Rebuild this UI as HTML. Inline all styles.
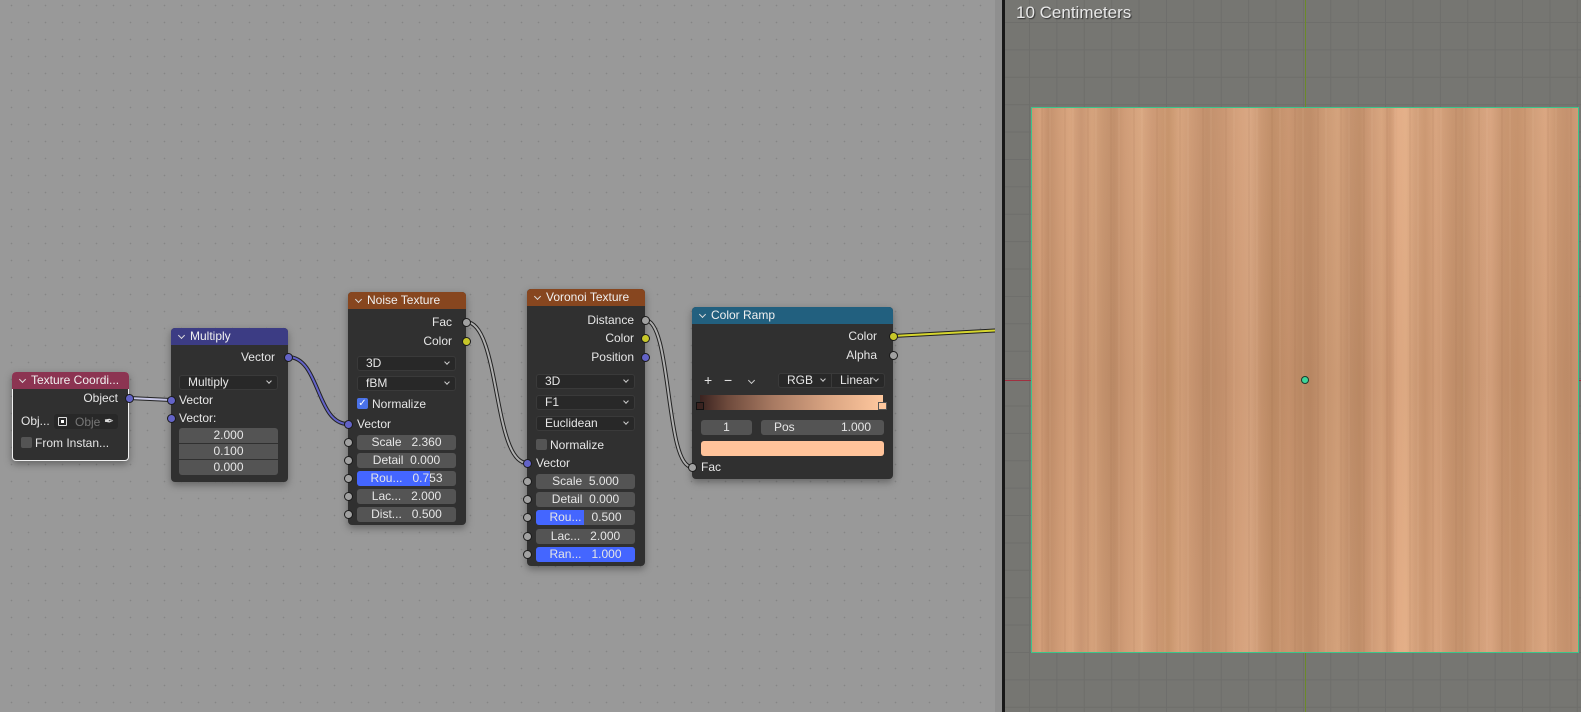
<!DOCTYPE html>
<html><head><meta charset="utf-8">
<style>
*{box-sizing:border-box;margin:0;padding:0}
body{width:1581px;height:712px;overflow:hidden;position:relative;background:#999;font-family:"Liberation Sans","DejaVu Sans",sans-serif;font-size:12px;color:#e6e6e6}
.ne{position:absolute;left:0;top:0;width:995px;height:712px;background-color:#999;
background-image:radial-gradient(circle,#858585 0.6px,transparent 1px);background-size:17px 17px;background-position:3px -3px}
.a{position:absolute}
.node{position:absolute;background:#303030;border-radius:4px;box-shadow:0 3px 8px rgba(0,0,0,.35)}
.hd{position:absolute;left:0;top:0;right:0;height:17px;border-radius:4px 4px 0 0;color:#f0f0f0;font-size:12px;line-height:17px;padding-left:19px;white-space:nowrap;overflow:hidden}
.hd:before{content:"";position:absolute;left:8px;top:5px;width:4px;height:4px;border-right:1px solid #ddd;border-bottom:1px solid #ddd;transform:rotate(45deg)}
.lbl{position:absolute;line-height:14px;white-space:nowrap}
.sk{position:absolute;width:9px;height:9px;border-radius:50%;border:1px solid #1a1a1a;margin:-4.5px 0 0 -4.5px}
.v{background:#6363c7}.g{background:#a1a1a1}.y{background:#c7c729}
.fld{position:absolute;height:15px;background:#545454;border-radius:3px;line-height:15px;text-align:center;white-space:nowrap;overflow:hidden}
.fld .bl{position:absolute;left:0;top:0;bottom:0;background:#4466ff}
.fld span{position:relative}
.dd{position:absolute;height:15px;background:#282828;border:1px solid #3a3a3a;border-radius:3px;line-height:13px;padding-left:8px;white-space:nowrap}
.dd:after{content:"";position:absolute;right:6px;top:3px;width:3px;height:3px;border-right:1px solid #ccc;border-bottom:1px solid #ccc;transform:rotate(45deg)}
.cb{position:absolute;width:11px;height:11px;border-radius:2px;background:#545454}
.vp{position:absolute;left:1005px;top:0;width:576px;height:712px;background-color:#767672;
background-image:linear-gradient(to right,#6e6e6b 1px,transparent 1px),linear-gradient(to bottom,#6e6e6b 1px,transparent 1px);
background-size:27.4px 27.4px;background-position:24px 22px}
.wood{position:absolute;left:1031px;top:107px;width:548px;height:546px;border:1.5px solid #3cc48a;
background:
repeating-linear-gradient(to right,rgba(0,0,0,0) 0px,rgba(0,0,0,0) 9px,rgba(150,100,70,.18) 10px,rgba(0,0,0,0) 11px,rgba(0,0,0,0) 17px,rgba(255,220,190,.12) 18px,rgba(0,0,0,0) 19px,rgba(0,0,0,0) 23px),
linear-gradient(to bottom,rgba(255,255,255,.03),rgba(0,0,0,.03) 50%,rgba(255,255,255,.02)),
linear-gradient(to right,#c9916c 0%,#d39e78 1.5%,#c28e69 3%,#cf9a74 5%,#d8a37c 7%,#c89470 9%,#d4a079 11%,#c8956f 13%,#c08d68 15%,#cf9a74 17%,#d8a57e 20%,#cd9873 22%,#c69269 25%,#d6a27b 27%,#c99570 30%,#c08d68 32%,#c8946f 35%,#d5a07a 38%,#d8a580 40%,#c9956f 42%,#bf8c65 44%,#c9946e 47%,#c08d67 49%,#bd8a65 51%,#c8956f 53%,#d3a079 56%,#c4916c 58%,#bf8c66 60%,#cd9873 62%,#d7a37c 64%,#cc9670 65.5%,#e2ab84 67%,#e3ae86 68.5%,#d4a07a 70%,#cb966f 72%,#d7a27c 74%,#c7936d 77%,#c28f69 79%,#cf9b75 81%,#d8a37e 84%,#c8946e 86%,#c59069 89%,#d19d77 92%,#d9a47e 94%,#c9956f 96%,#c38f6a 98%,#cd9873 100%)}
</style></head><body>
<div class="ne"></div>

<svg class="a" style="left:0;top:0" width="1005" height="712">
<g fill="none" stroke-linecap="round">
<path d="M129 398 L171 400" stroke="#222" stroke-width="4"/><path d="M129 398 L171 400" stroke="#c8c8e8" stroke-width="2"/>
<path d="M288 357 C320 357,316 424,348 424" stroke="#222" stroke-width="4"/><path d="M288 357 C320 357,316 424,348 424" stroke="#6363c7" stroke-width="2"/>
<path d="M466 322 C500 322,493 463,527 463" stroke="#222" stroke-width="4"/><path d="M466 322 C500 322,493 463,527 463" stroke="#b0b0b0" stroke-width="2"/>
<path d="M645 320 C672 320,665 467,692 467" stroke="#222" stroke-width="4"/><path d="M645 320 C672 320,665 467,692 467" stroke="#b0b0b0" stroke-width="2"/>
<path d="M893 336 L1004 330" stroke="#222" stroke-width="4"/><path d="M893 336 L1004 330" stroke="#d6d62e" stroke-width="2"/>
</g></svg>

<div class="a" style="left:995px;top:0;width:7px;height:712px;background:#8f8f8f"></div>
<div class="a" style="left:1002px;top:0;width:3px;height:712px;background:#181818"></div>
<div class="vp"></div>
<div class="a" style="left:1305px;top:0;width:1px;height:712px;background:#6b8a2a"></div>
<div class="a" style="left:1005px;top:380px;width:576px;height:1px;background:#a03040"></div>
<div class="wood"></div>
<div class="a" style="left:1301px;top:376px;width:8px;height:8px;border-radius:50%;background:#3cd59a;border:1px solid #1c3a2c"></div>
<div class="lbl" style="left:1016px;top:3px;font-size:17px;line-height:20px;color:#e8e8e8;text-shadow:1px 1px 1px #333">10 Centimeters</div>

<!-- Texture Coordinate -->
<div class="node" style="left:12px;top:372px;width:117px;height:89px;border:1px solid #f0f0f0">
<div class="hd" style="background:#8c3452;top:-1px;left:-1px;right:-1px">Texture Coordi...</div>
</div>
<div class="lbl" style="left:60px;top:391px;width:58px;text-align:right">Object</div>
<div class="sk v" style="left:129px;top:398px"></div>
<div class="lbl" style="left:21px;top:414px">Obj...</div>
<div class="a" style="left:54px;top:414px;width:64px;height:15px;background:#282828;border-radius:3px"></div>
<div class="a" style="left:58px;top:417px;width:9px;height:9px;border:1px solid #ddd;border-radius:1px"><div style="margin:2px;width:3px;height:3px;background:#fff"></div></div>
<div class="lbl" style="left:75px;top:415px;color:#777">Obje</div>
<div class="lbl" style="left:104px;top:414px;color:#ddd">&#10002;</div>
<div class="cb" style="left:21px;top:437px"></div>
<div class="lbl" style="left:35px;top:436px">From Instan...</div>

<!-- Multiply -->
<div class="node" style="left:171px;top:328px;width:117px;height:154px">
<div class="hd" style="background:#3c3c84">Multiply</div>
</div>
<div class="lbl" style="left:200px;top:350px;width:75px;text-align:right">Vector</div>
<div class="sk v" style="left:288px;top:357px"></div>
<div class="dd" style="left:179px;top:375px;width:99px">Multiply</div>
<div class="sk v" style="left:171px;top:400px"></div>
<div class="lbl" style="left:179px;top:393px">Vector</div>
<div class="sk v" style="left:171px;top:418px"></div>
<div class="lbl" style="left:179px;top:411px">Vector:</div>
<div class="fld" style="left:179px;top:428px;width:99px;border-radius:3px 3px 0 0">2.000</div>
<div class="fld" style="left:179px;top:444px;width:99px;border-radius:0">0.100</div>
<div class="fld" style="left:179px;top:460px;width:99px;border-radius:0 0 3px 3px">0.000</div>

<!-- Noise -->
<div class="node" style="left:348px;top:292px;width:118px;height:233px">
<div class="hd" style="background:#87461f">Noise Texture</div>
</div>
<div class="lbl" style="left:400px;top:315px;width:52px;text-align:right">Fac</div>
<div class="sk g" style="left:466px;top:322px"></div>
<div class="lbl" style="left:400px;top:334px;width:52px;text-align:right">Color</div>
<div class="sk y" style="left:466px;top:341px"></div>
<div class="dd" style="left:357px;top:356px;width:99px">3D</div>
<div class="dd" style="left:357px;top:376px;width:99px">fBM</div>
<div class="cb" style="left:357px;top:398px;background:#4a72e8;color:#fff;font-size:10px;line-height:11px;text-align:center">&#10003;</div>
<div class="lbl" style="left:372px;top:397px">Normalize</div>
<div class="sk v" style="left:348px;top:424px"></div>
<div class="lbl" style="left:357px;top:417px">Vector</div>
<div class="sk g" style="left:348px;top:442px"></div><div class="fld" style="left:357px;top:435px;width:99px">Scale&nbsp;&nbsp;&nbsp;2.360</div>
<div class="sk g" style="left:348px;top:460px"></div><div class="fld" style="left:357px;top:453px;width:99px">Detail&nbsp;&nbsp;0.000</div>
<div class="sk g" style="left:348px;top:478px"></div><div class="fld" style="left:357px;top:471px;width:99px"><div class="bl" style="width:73px"></div><span>Rou...&nbsp;&nbsp;&nbsp;0.753</span></div>
<div class="sk g" style="left:348px;top:496px"></div><div class="fld" style="left:357px;top:489px;width:99px">Lac...&nbsp;&nbsp;&nbsp;2.000</div>
<div class="sk g" style="left:348px;top:514px"></div><div class="fld" style="left:357px;top:507px;width:99px">Dist...&nbsp;&nbsp;&nbsp;0.500</div>

<!-- Voronoi -->
<div class="node" style="left:527px;top:289px;width:118px;height:277px">
<div class="hd" style="background:#87461f">Voronoi Texture</div>
</div>
<div class="lbl" style="left:560px;top:313px;width:74px;text-align:right">Distance</div>
<div class="sk g" style="left:645px;top:320px"></div>
<div class="lbl" style="left:560px;top:331px;width:74px;text-align:right">Color</div>
<div class="sk y" style="left:645px;top:338px"></div>
<div class="lbl" style="left:560px;top:350px;width:74px;text-align:right">Position</div>
<div class="sk v" style="left:645px;top:357px"></div>
<div class="dd" style="left:536px;top:374px;width:99px">3D</div>
<div class="dd" style="left:536px;top:395px;width:99px">F1</div>
<div class="dd" style="left:536px;top:416px;width:99px">Euclidean</div>
<div class="cb" style="left:536px;top:439px"></div>
<div class="lbl" style="left:550px;top:438px">Normalize</div>
<div class="sk v" style="left:527px;top:463px"></div>
<div class="lbl" style="left:536px;top:456px">Vector</div>
<div class="sk g" style="left:527px;top:481px"></div><div class="fld" style="left:536px;top:474px;width:99px">Scale&nbsp;&nbsp;5.000</div>
<div class="sk g" style="left:527px;top:499px"></div><div class="fld" style="left:536px;top:492px;width:99px">Detail&nbsp;&nbsp;0.000</div>
<div class="sk g" style="left:527px;top:517px"></div><div class="fld" style="left:536px;top:510px;width:99px"><div class="bl" style="width:48px"></div><span>Rou...&nbsp;&nbsp;&nbsp;0.500</span></div>
<div class="sk g" style="left:527px;top:536px"></div><div class="fld" style="left:536px;top:529px;width:99px">Lac...&nbsp;&nbsp;&nbsp;2.000</div>
<div class="sk g" style="left:527px;top:554px"></div><div class="fld" style="left:536px;top:547px;width:99px"><div class="bl" style="width:99px"></div><span>Ran...&nbsp;&nbsp;&nbsp;1.000</span></div>

<!-- Color Ramp -->
<div class="node" style="left:692px;top:307px;width:201px;height:172px">
<div class="hd" style="background:#22607f">Color Ramp</div>
</div>
<div class="lbl" style="left:820px;top:329px;width:57px;text-align:right">Color</div>
<div class="sk y" style="left:893px;top:336px"></div>
<div class="lbl" style="left:820px;top:348px;width:57px;text-align:right">Alpha</div>
<div class="sk g" style="left:893px;top:355px"></div>
<div class="lbl" style="left:704px;top:373px;font-size:14px">+</div>
<div class="lbl" style="left:724px;top:373px;font-size:14px">&#8722;</div>
<div class="a" style="left:749px;top:378px;width:5px;height:5px;border-right:1px solid #ccc;border-bottom:1px solid #ccc;transform:rotate(45deg)"></div>
<div class="dd" style="left:778px;top:373px;width:54px;border-radius:3px 0 0 3px">RGB</div>
<div class="dd" style="left:831px;top:373px;width:54px;border-radius:0 3px 3px 0">Linear</div>
<div class="a" style="left:700px;top:395px;width:183px;height:15px;background:linear-gradient(to right,#3a2320,#6e4a3c 15%,#a87a62 40%,#d9a482 70%,#ffc89e)"></div>
<div class="a" style="left:696px;top:402px;width:8px;height:8px;background:#3a2320;border:1px solid #111"></div>
<div class="a" style="left:878px;top:402px;width:9px;height:8px;background:#ffc89e;border:1px solid #555"></div>
<div class="fld" style="left:701px;top:420px;width:51px">1</div>
<div class="fld" style="left:761px;top:420px;width:123px;text-align:left;padding-left:13px">Pos<span style="position:absolute;right:13px">1.000</span></div>
<div class="a" style="left:701px;top:441px;width:183px;height:15px;background:#ffc39a;border-radius:3px"></div>
<div class="sk g" style="left:692px;top:467px"></div>
<div class="lbl" style="left:701px;top:460px">Fac</div>
</body></html>
